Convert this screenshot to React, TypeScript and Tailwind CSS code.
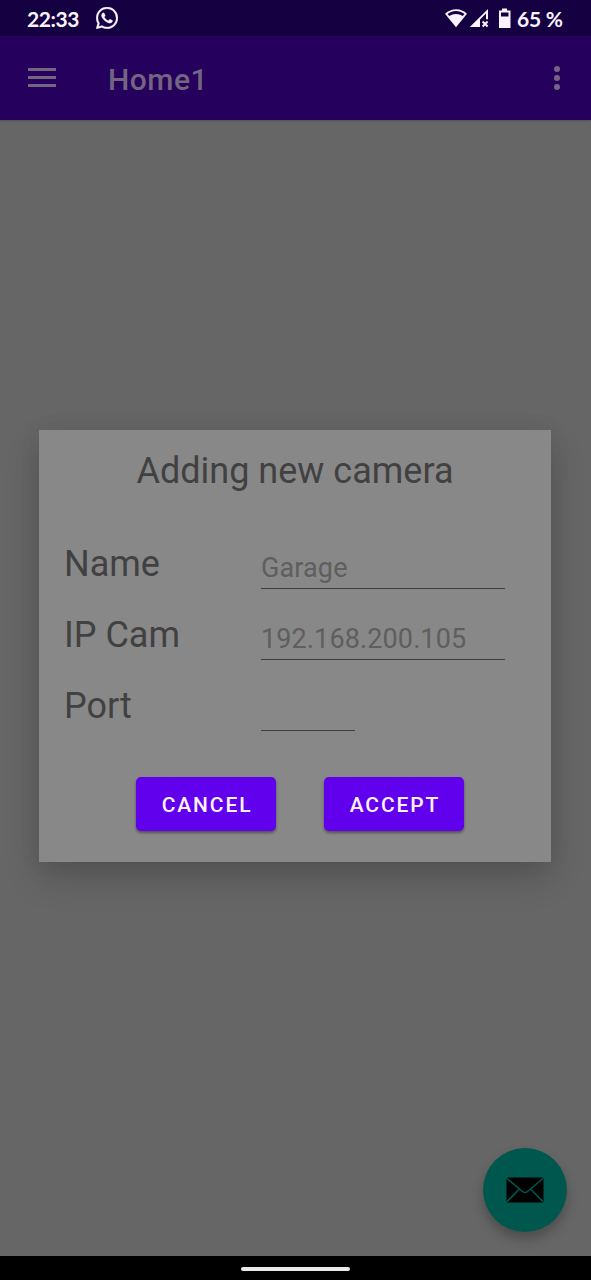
import React from "react";

function StatusBar() {
  return (
    <div className="flex h-9 items-center bg-[#150042] pl-[27px] pr-[27px] font-['Lato','Liberation_Sans',sans-serif] text-[21px] font-bold leading-9 text-[#fbf4ff]">
      <span className="w-[53px] whitespace-nowrap pt-[1px] tracking-[-0.4px]">22:33</span>
      <svg className="ml-4 mb-[1px]" width="22" height="22" viewBox="0 0 24 24" fill="currentColor" stroke="currentColor" strokeWidth=".3">
        <path d="M17.472 14.382c-.297-.149-1.758-.867-2.03-.967-.273-.099-.471-.148-.67.15-.197.297-.767.966-.94 1.164-.173.199-.347.223-.644.075-.297-.15-1.255-.463-2.39-1.475-.883-.788-1.48-1.761-1.653-2.059-.173-.297-.018-.458.13-.606.134-.133.298-.347.446-.52.149-.174.198-.298.298-.497.099-.198.05-.371-.025-.52-.075-.149-.669-1.612-.916-2.207-.242-.579-.487-.5-.669-.51-.173-.008-.371-.01-.57-.01-.198 0-.52.074-.792.372-.272.297-1.04 1.016-1.04 2.479 0 1.462 1.065 2.875 1.213 3.074.149.198 2.096 3.2 5.077 4.487.709.306 1.262.489 1.694.625.712.227 1.36.195 1.871.118.571-.085 1.758-.719 2.006-1.413.248-.694.248-1.289.173-1.413-.074-.124-.272-.198-.57-.347m-5.421 7.403h-.004a9.87 9.87 0 01-5.031-1.378l-.361-.214-3.741.982.998-3.648-.235-.374a9.86 9.86 0 01-1.51-5.26c.001-5.45 4.436-9.884 9.888-9.884 2.64 0 5.122 1.03 6.988 2.898a9.825 9.825 0 012.893 6.994c-.003 5.45-4.437 9.884-9.885 9.884m8.413-18.297A11.815 11.815 0 0012.05 0C5.495 0 .16 5.335.157 11.892c0 2.096.547 4.142 1.588 5.945L.057 24l6.305-1.654a11.882 11.882 0 005.683 1.448h.005c6.554 0 11.89-5.335 11.893-11.893a11.821 11.821 0 00-3.48-8.413z" />
      </svg>
      <svg className="ml-auto" width="66" height="22" viewBox="0 0 66 22" fill="currentColor">
        <path fillRule="evenodd" d="M0 6.800C6 .600 16.500 .600 22 6.800L11 20.300ZM2.500 6.900L4.300 9C8 6.300 14 6.300 17.700 9L19.500 6.900C14.500 2.900 7.500 2.900 2.500 6.900Z" />
        <path fillRule="evenodd" d="M43 2V12.300H41V6.600L35 12.600V20H24.800Z" />
        <path d="M37.600 14.500L42.600 19.500M42.600 14.500L37.600 19.500" stroke="currentColor" strokeWidth="2" />
        <path fillRule="evenodd" d="M57 1.500H62V3.500H65.500V21H54V3.500H57ZM56 5.500V9.500H63.500V5.500Z" />
      </svg>
      <span className="ml-[6px] w-[47px] whitespace-nowrap pt-[1px] tracking-[-0.2px]">65 %</span>
    </div>
  );
}

function AppBar() {
  return (
    <header className="flex h-[84px] items-center bg-[#26005d] text-[#736580] shadow-[0_1px_2px_rgba(0,0,0,0.2)]">
      <button aria-label="Menu" className="ml-7 mb-[2px] flex h-[19px] w-7 flex-col justify-between">
        <span className="h-[3px] w-full bg-current" />
        <span className="h-[3px] w-full bg-current" />
        <span className="h-[3px] w-full bg-current" />
      </button>
      <h1 className="ml-[52px] pt-1 text-[30px] font-medium leading-9 tracking-[0.5px]">Home1</h1>
      <button aria-label="More" className="ml-auto mr-[30px] flex h-6 w-[7px] flex-col justify-between">
        <span className="h-[6px] w-[6px] rounded-full bg-current" />
        <span className="h-[6px] w-[6px] rounded-full bg-current" />
        <span className="h-[6px] w-[6px] rounded-full bg-current" />
      </button>
    </header>
  );
}

function Field({ label, hint, short }: { label: string; hint?: string; short?: boolean }) {
  return (
    <label className="flex h-[71px] items-start">
      <span className="w-[197px] text-[36px] leading-[42px] text-[#414141]">{label}</span>
      <input
        placeholder={hint}
        className={`${short ? "w-[94px]" : "w-[244px]"} mt-[9px] h-[37px] border-b border-[#3f3f3f] bg-transparent pb-1 text-[27px] leading-8 tracking-[0.12px] outline-none placeholder:text-[#5e5e5e] placeholder:opacity-100`}
      />
    </label>
  );
}

function ActionButton({ children }: { children: string }) {
  return (
    <button className="h-[54px] w-[140px] rounded-[5px] bg-[#6100ed] pl-[2px] pt-[3px] text-center text-[21px] font-medium tracking-[1.88px] text-[#fff2ff] shadow-[0_2px_3px_rgba(0,0,0,0.4)]">
      {children}
    </button>
  );
}

export default function App() {
  return (
    <div className="relative flex h-[1280px] w-[591px] flex-col overflow-hidden bg-[#666666] font-['Roboto',sans-serif]">
      <StatusBar />
      <AppBar />
      <main className="flex-1 px-[39px] pt-[310px]">
        <section className="h-[432px] w-[512px] bg-[#888888] pt-5 shadow-[0_16px_32px_rgba(0,0,0,0.18),0_0_22px_rgba(0,0,0,0.06)]">
          <h2 className="text-center text-[36px] leading-[42px] text-[#414141]">Adding new camera</h2>
          <div className="ml-[25px] mt-[51px]">
            <Field label="Name" hint="Garage" />
            <Field label="IP Cam" hint="192.168.200.105" />
            <Field label="Port" short />
          </div>
          <div className="mt-[21px] flex justify-center gap-12 pl-[10px]">
            <ActionButton>CANCEL</ActionButton>
            <ActionButton>ACCEPT</ActionButton>
          </div>
        </section>
      </main>
      <button aria-label="Mail" className="absolute bottom-12 right-6 flex h-[84px] w-[84px] items-center justify-center rounded-full bg-[#00574e] shadow-[0_7px_12px_rgba(0,0,0,0.25)]">
        <svg width="38" height="26" viewBox="0 0 38 26">
          <rect x=".5" y=".5" width="37" height="25" rx="1.500" fill="#000" />
          <path d="M1 1.500L16.500 14.500Q19 16.500 21.500 14.500L37 1.500M1 24.500L13.500 12M37 24.500L24.500 12" fill="none" stroke="#00574e" strokeWidth="1.600" />
        </svg>
      </button>
      <nav className="flex h-6 items-center justify-center bg-black pt-[2px]">
        <div className="h-1 w-[109px] rounded-full bg-[#e9e9e9]" />
      </nav>
    </div>
  );
}
